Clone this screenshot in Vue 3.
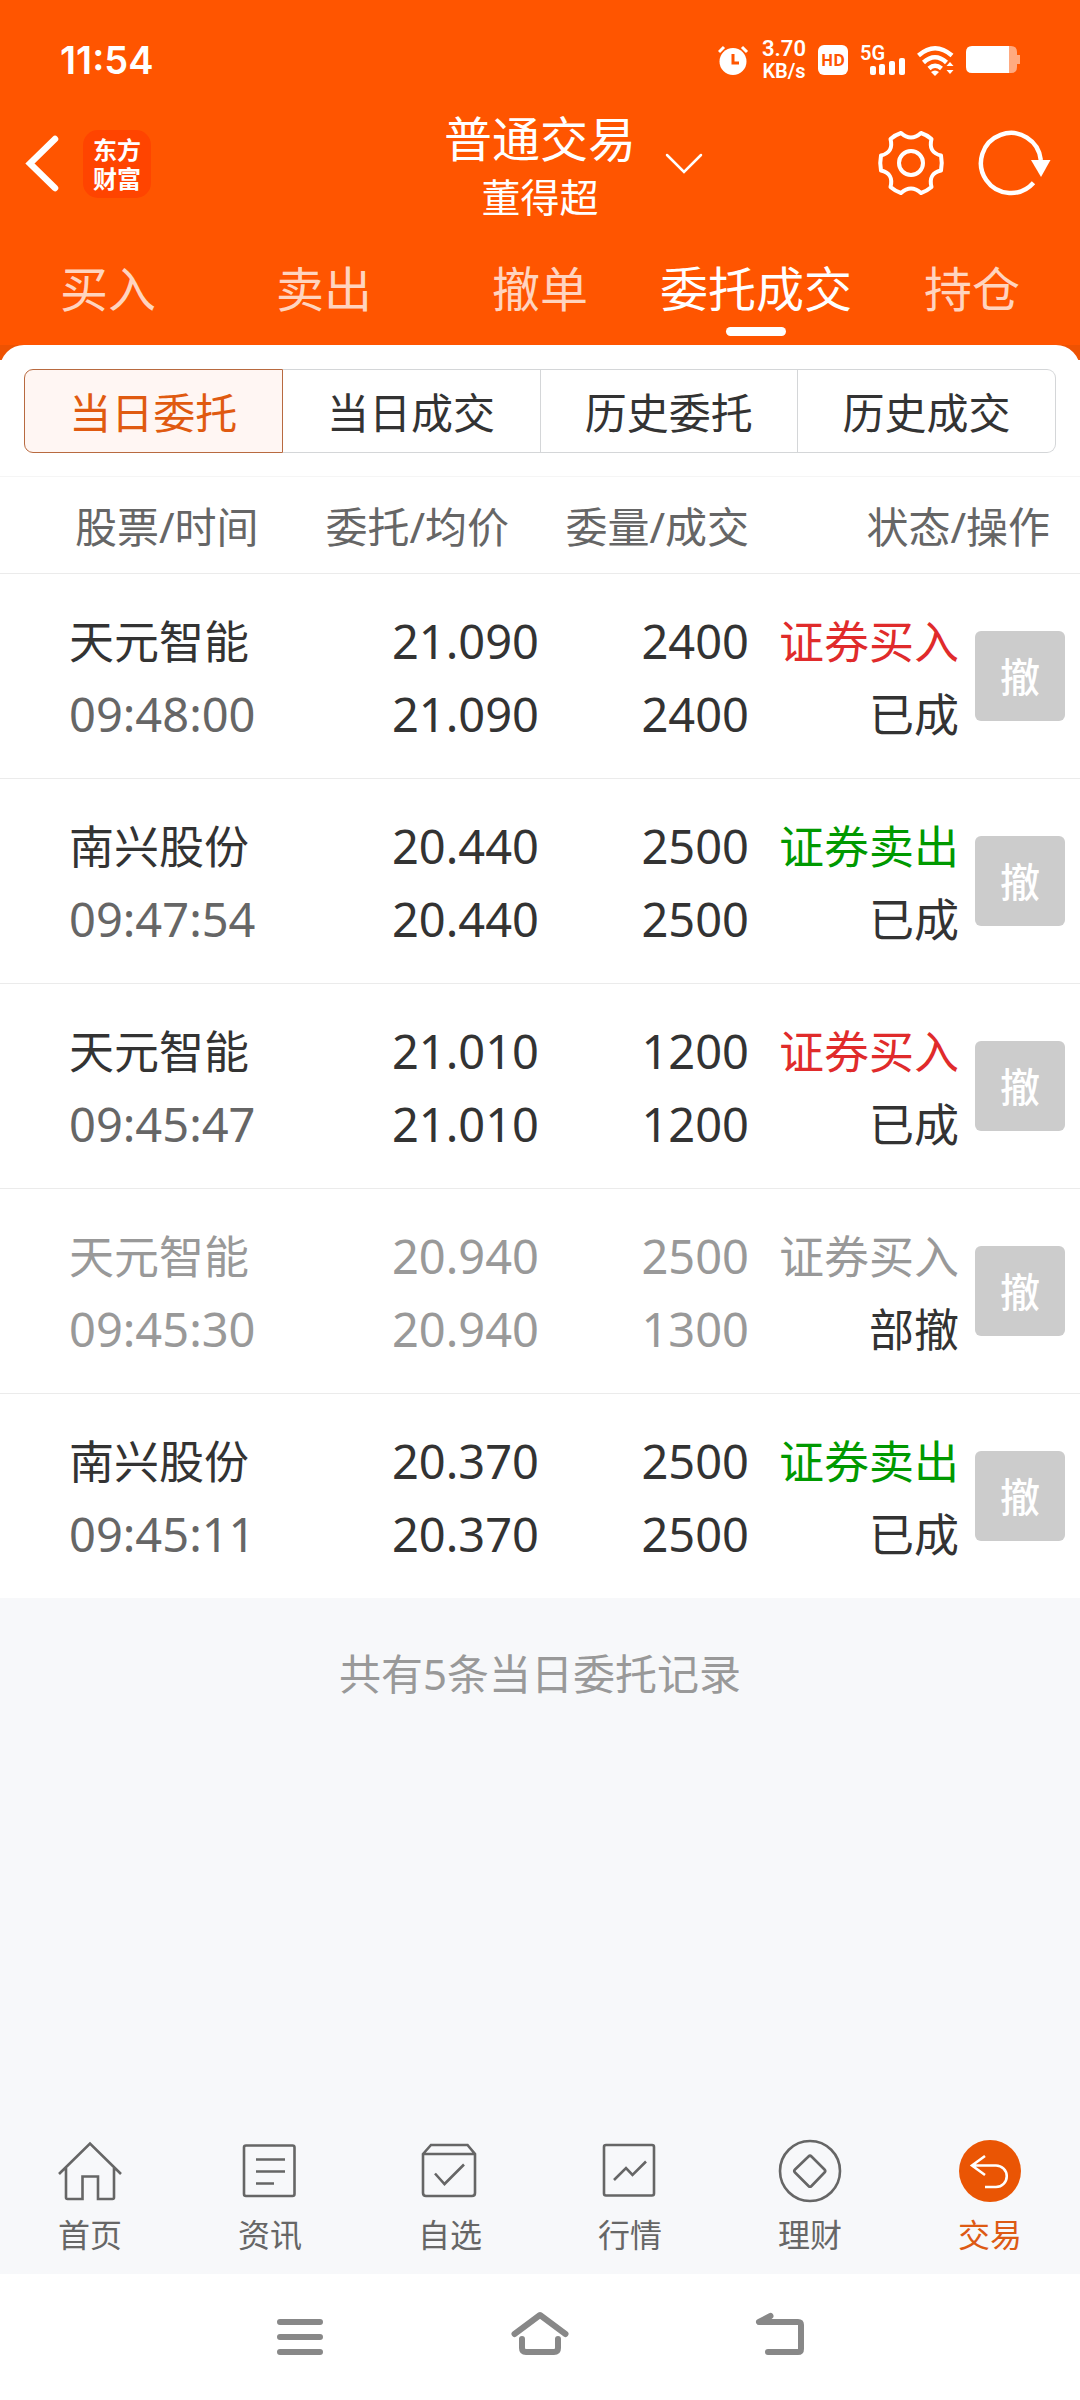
<script setup>
import { ref } from 'vue'

const tabs = ['买入', '卖出', '撤单', '委托成交', '持仓'];
const activeTab = ref('委托成交');

const segments = ['当日委托', '当日成交', '历史委托', '历史成交'];
const activeSegment = ref('当日委托');

const orders = ref([
    { name: '天元智能', time: '09:48:00', price: '21.090', avg: '21.090', amount: 2400, deal: 2400, side: 'buy', status: '已成' },
    { name: '南兴股份', time: '09:47:54', price: '20.440', avg: '20.440', amount: 2500, deal: 2500, side: 'sell', status: '已成' },
    { name: '天元智能', time: '09:45:47', price: '21.010', avg: '21.010', amount: 1200, deal: 1200, side: 'buy', status: '已成' },
    { name: '天元智能', time: '09:45:30', price: '20.940', avg: '20.940', amount: 2500, deal: 1300, side: 'buy', status: '部撤', off: true },
    { name: '南兴股份', time: '09:45:11', price: '20.370', avg: '20.370', amount: 2500, deal: 2500, side: 'sell', status: '已成' },
]);

const sideText = { buy: '证券买入', sell: '证券卖出' };

// icons are drawn in a 64x64 box
const menu = [
    { text: '首页', icon: 'M1 35L32 4.5L63 35M8 29V58.5Q8 60 9.5 60H24.5V37.5H40V60H54.5Q56 60 56 58.5V29' },
    { text: '资讯', icon: 'M8 6.5H54.5Q56.5 6.5 56.5 8.5V55Q56.5 57 54.5 57H8Q6 57 6 55V8.5Q6 6.5 8 6.5ZM18 20.5H47M18 32.5H47M18 44.5H36' },
    { text: '自选', icon: 'M5 15L13 6H49.5L57 15V54Q57 57 54 57H8Q5 57 5 54ZM5 15H57M17 34.5L26.5 45L46 25.5' },
    { text: '行情', icon: 'M8 6H54Q56 6 56 8V54.5Q56 56.5 54 56.5H8Q6 56.5 6 54.5V8Q6 6 8 6ZM16 41L28 29L34.5 36L48 22.5' },
    { text: '理财', icon: 'M32 2A30 30 0 0 1 32 62A30 30 0 0 1 32 2ZM30.5 17.5Q32 16 33.5 17.5L46.5 30.5Q48 32 46.5 33.5L33.5 47Q32 48.5 30.5 47L17 33.5Q15.5 32 17 30.5Z' },
    { text: '交易', icon: 'M27 17L14 26.5L27 36M14 26.5H38A10.5 10.5 0 0 1 38 48H27', active: true },
];
</script>

<template>
    <div class="page">
        <header class="top">
            <div class="statusbar">
                <span class="clock">11:54</span>
                <div class="signs">
                    <svg width="32" height="32" viewBox="0 0 32 32" fill="none">
                        <circle cx="15" cy="17.5" r="13.5" fill="#fff" />
                        <path d="M1 8L6 3M29 8L24 3" stroke="#fff" stroke-width="3" />
                        <path d="M15 10V19H21" stroke="#ff5500" stroke-width="3" />
                    </svg>
                    <div class="speed"><span class="value">3.70</span><span class="unit">KB/s</span></div>
                    <span class="hd">HD</span>
                    <div class="signal">
                        <span>5G</span>
                        <svg width="45" height="17" viewBox="0 0 45 17" fill="#fff">
                            <rect x="10" y="8" width="6" height="9" rx="2" />
                            <rect x="19" y="6" width="6" height="11" rx="2" />
                            <rect x="29" y="3" width="6" height="14" rx="2" />
                            <rect x="39" y="0" width="6" height="17" rx="2" />
                        </svg>
                    </div>
                    <svg width="37" height="32" viewBox="0 0 37 32" fill="none">
                        <path d="M1.5 11.5Q18 -3 35 11.5M6.5 18.5Q18 8 29.5 18.5M12 24.5Q18 19 24.5 24.5" stroke="#fff" stroke-width="4.5" />
                        <path d="M14 28Q18 25 22 28L18 32ZM29.5 22L33 18L36.5 22ZM29.5 26H36.5L33 30Z" fill="#fff" />
                    </svg>
                    <svg width="54" height="28" viewBox="0 0 54 28">
                        <path d="M43 0H45Q51 0 51 6V9H54V18H51V21Q51 27 45 27H43Z" fill="#fff" fill-opacity=".5" />
                        <path d="M6 0H43V27H6Q0 27 0 21V6Q0 0 6 0Z" fill="#fff" />
                    </svg>
                </div>
            </div>

            <div class="navbar">
                <div class="left">
                    <button class="plain" aria-label="返回">
                        <svg width="36" height="60" viewBox="0 0 36 60" fill="none">
                            <path d="M31 5L6 29.5L31 54" stroke="#fff" stroke-width="6.5" stroke-linecap="round" />
                        </svg>
                    </button>
                    <div class="logo">东方<br>财富</div>
                </div>
                <button class="plain title">
                    <span class="main">普通交易</span>
                    <span class="sub">董得超</span>
                </button>
                <div class="right">
                    <button class="plain" aria-label="切换账户">
                        <svg width="40" height="28" viewBox="0 0 40 28" fill="none">
                            <path d="M3 5L20 22L37 5" stroke="#fff" stroke-width="2.5" stroke-linecap="round" />
                        </svg>
                    </button>
                    <div class="tools">
                        <button class="plain" aria-label="设置">
                            <svg width="72" height="72" viewBox="-36 -35 72 72" fill="none" stroke="#fff" stroke-width="4" stroke-linejoin="round">
                                <path d="M-10 -30Q0 -21 10 -30Q16 -28 20.5 -24Q17 -10.5 30 -7.5Q31.5 0 30 7.5Q17 10.5 20.5 24Q16 28 10 30Q0 21 -10 30Q-16 28 -20.5 24Q-17 10.5 -30 7.5Q-31.5 0 -30 -7.5Q-17 -10.5 -20.5 -24Q-16 -28 -10 -30Z" />
                                <circle r="12" />
                            </svg>
                        </button>
                        <button class="plain" aria-label="刷新">
                            <svg width="76" height="72" viewBox="-36 -35 76 72" fill="none">
                                <path d="M22.5 19.8A30 30 0 1 1 29.8 -3" stroke="#fff" stroke-width="4.5" />
                                <path d="M20 -3H39.5L30 14Z" fill="#fff" />
                            </svg>
                        </button>
                    </div>
                </div>
            </div>

            <nav class="tabs">
                <button v-for="tab in tabs" :key="tab" class="plain tab" :class="{ on: tab === activeTab }"
                    @click="activeTab = tab">{{ tab }}</button>
            </nav>
        </header>

        <main>
            <div class="sheet">
                <div class="segments">
                    <button v-for="item in segments" :key="item" :class="{ on: item === activeSegment }"
                        @click="activeSegment = item">{{ item }}</button>
                </div>
            </div>

            <table class="orders">
                <colgroup>
                    <col>
                    <col class="c-price">
                    <col class="c-amount">
                    <col class="c-state">
                    <col class="c-action">
                </colgroup>
                <thead>
                    <tr>
                        <th class="h-name">股票/时间</th>
                        <th class="h-price">委托/均价</th>
                        <th>委量/成交</th>
                        <th class="h-state" colspan="2">状态/操作</th>
                    </tr>
                </thead>
                <tbody>
                    <tr v-for="order in orders" :key="order.time" :class="{ off: order.off }">
                        <td class="name">
                            <div>{{ order.name }}</div>
                            <div class="num time">{{ order.time }}</div>
                        </td>
                        <td class="num">
                            <div>{{ order.price }}</div>
                            <div>{{ order.avg }}</div>
                        </td>
                        <td class="num">
                            <div>{{ order.amount }}</div>
                            <div>{{ order.deal }}</div>
                        </td>
                        <td>
                            <div :class="order.side">{{ sideText[order.side] }}</div>
                            <div class="status">{{ order.status }}</div>
                        </td>
                        <td class="action"><button class="cancel">撤</button></td>
                    </tr>
                </tbody>
            </table>
            <p class="total">共有{{ orders.length }}条当日委托记录</p>
        </main>

        <nav class="menu">
            <a v-for="item in menu" :key="item.text" href="#" :class="{ on: item.active }">
                <svg width="64" height="64" viewBox="0 0 64 64" fill="none">
                    <circle v-if="item.active" cx="32" cy="32" r="31" fill="#ea5504" />
                    <path :d="item.icon" :stroke="item.active ? '#fff' : '#666'" stroke-width="2.6" />
                </svg>
                <span>{{ item.text }}</span>
            </a>
        </nav>

        <div class="sysbar">
            <button class="plain" aria-label="最近任务">
                <svg width="60" height="60" viewBox="0 0 60 60">
                    <path d="M10 15H50M10 30H50M10 45H50" />
                </svg>
            </button>
            <button class="plain" aria-label="主屏幕">
                <svg width="60" height="60" viewBox="0 0 60 60">
                    <path d="M4.5 27L30 8L55.5 27M12 32V41Q12 45 16 45H44Q48 45 48 41V32" />
                </svg>
            </button>
            <button class="plain" aria-label="后退">
                <svg width="60" height="60" viewBox="0 0 60 60">
                    <path d="M20.5 9L9 15H48Q51 15 51 18V42Q51 45 48 45H18" />
                </svg>
            </button>
        </div>
    </div>
</template>

<style>
body {
    margin: 0;
    background: #f7f8fa;
}
</style>

<style scoped>
.page {
    min-height: 100vh;
    display: flex;
    flex-direction: column;
    color: #333;
    font-family: "Noto Sans", "Noto Sans CJK SC", sans-serif;
}

button {
    font-family: inherit;
    cursor: pointer;
}

svg {
    display: block;
}

.plain {
    padding: 0;
    border: 0;
    background: none;
    color: inherit;
}

.top {
    background: #ff5500;
    color: #fff;
}

.statusbar {
    height: 100px;
    padding: 20px 60px 0;
    box-sizing: border-box;
    display: flex;
    justify-content: space-between;
    align-items: center;
}

.clock {
    font-family: "Inter", sans-serif;
    font-size: 38px;
    font-weight: 600;
}

.signs {
    display: flex;
    align-items: center;
    gap: 12px;
}

.speed {
    display: flex;
    flex-direction: column;
    align-items: center;
    font-family: Roboto, sans-serif;
    font-weight: 600;
    line-height: 22px;
}

.speed .value {
    font-size: 22px;
}

.speed .unit {
    font-size: 20px;
}

.hd {
    width: 30px;
    border-radius: 6px;
    background: #fff;
    color: #ff5500;
    font-size: 16px;
    font-weight: 700;
    line-height: 30px;
    text-align: center;
}

.signal {
    display: grid;
    height: 30px;
    font-family: Roboto, sans-serif;
    font-size: 20px;
    font-weight: 600;
    line-height: 16px;
}

.signal > * {
    grid-area: 1 / 1;
}

.signal svg {
    align-self: end;
}

.navbar {
    height: 128px;
    display: grid;
    grid-template-columns: 1fr auto 1fr;
    align-items: center;
}

.left {
    display: flex;
    align-items: center;
    gap: 23px;
    padding-left: 24px;
}

.logo {
    width: 68px;
    padding: 5px 0;
    border-radius: 15px;
    background: #ff4400;
    font-size: 24px;
    font-weight: 700;
    line-height: 29px;
    text-align: center;
}

.title {
    display: flex;
    flex-direction: column;
    align-items: center;
    padding-top: 8px;
    line-height: 58px;
}

.title .main {
    font-size: 48px;
}

.title .sub {
    font-size: 39px;
}

.right {
    display: flex;
    align-items: center;
    justify-content: space-between;
    padding: 0 29px 0 28px;
}

.tools {
    display: flex;
    gap: 28px;
}

.tabs {
    display: flex;
    height: 117px;
}

.tab {
    flex: 1 1 0;
    display: flex;
    flex-direction: column;
    align-items: center;
    padding-top: 29px;
    color: rgba(255, 255, 255, 0.75);
    font-size: 48px;
    line-height: 64px;
    white-space: nowrap;
}

.tab.on {
    color: #fff;
}

.tab.on::after {
    content: "";
    width: 60px;
    height: 9px;
    margin-top: 6px;
    border-radius: 5px;
    background: #fff;
}

main {
    flex: 1;
    background: linear-gradient(#ee5202 15px, #fff 15px, #fff 60px, transparent 60px);
}

.sheet {
    padding: 24px 24px 23px;
    border-radius: 24px 24px 0 0;
    border-bottom: 1px solid #f5f5f5;
    background: #fff;
}

.segments {
    display: flex;
}

.segments button {
    flex: 1;
    height: 84px;
    padding: 0 0 2px;
    border: 1px solid #d4d6d8;
    border-left-width: 0;
    background: #fff;
    color: #333;
    font-size: 42px;
}

.segments button:first-child {
    border-left-width: 1px;
    border-radius: 9px 0 0 9px;
}

.segments button:last-child {
    border-radius: 0 9px 9px 0;
}

.segments button.on {
    border-color: #b86a40;
    background: #fff6f3;
    color: #e05a10;
}

.orders {
    width: 100%;
    table-layout: fixed;
    border-spacing: 0;
    background: #fff;
}

.c-price {
    width: 240px;
}

.c-amount,
.c-state {
    width: 210px;
}

.c-action {
    width: 121px;
}

th {
    height: 94px;
    padding: 0 0 2px;
    border-bottom: 1px solid #ebebeb;
    color: #666;
    font-size: 42px;
    font-weight: 400;
    text-align: right;
    white-space: nowrap;
}

th.h-name {
    padding-left: 75px;
    text-align: left;
}

th.h-price,
th.h-state {
    padding-right: 30px;
}

td {
    padding: 31px 0 27px;
    border-bottom: 1px solid #ebebeb;
    font-size: 45px;
    line-height: 73px;
    text-align: right;
    white-space: nowrap;
}

tbody tr:last-child td {
    border-bottom: 0;
}

td.name {
    padding-left: 69px;
    text-align: left;
}

td.num,
td .num {
    font-size: 47px;
}

.time {
    color: #666;
}

.buy {
    color: #e02b2b;
}

.sell {
    color: #009900;
}

.off td,
.off td div {
    color: #999;
}

.off td .status {
    color: #333;
}

td.action {
    padding: 0 15px 0 0;
}

.cancel {
    display: block;
    width: 90px;
    height: 90px;
    margin-left: auto;
    padding: 0 0 2px;
    border: 0;
    border-radius: 6px;
    background: #ccc;
    color: #fff;
    font-size: 40px;
    font-weight: 500;
}

.total {
    margin: 0;
    padding-top: 46px;
    color: #999;
    font-size: 42px;
    line-height: 60px;
    text-align: center;
}

.menu {
    display: flex;
    padding-bottom: 15px;
}

.menu a {
    flex: 1;
    display: flex;
    flex-direction: column;
    align-items: center;
    gap: 8px;
    color: #666;
    font-size: 32px;
    line-height: 48px;
    text-decoration: none;
}

.menu a.on {
    color: #dd5a14;
}

.sysbar {
    display: flex;
    justify-content: center;
    align-items: center;
    gap: 180px;
    height: 126px;
    background: #fff;
}

.sysbar path {
    fill: none;
    stroke: #888;
    stroke-width: 6;
    stroke-linecap: round;
    stroke-linejoin: round;
}
</style>
